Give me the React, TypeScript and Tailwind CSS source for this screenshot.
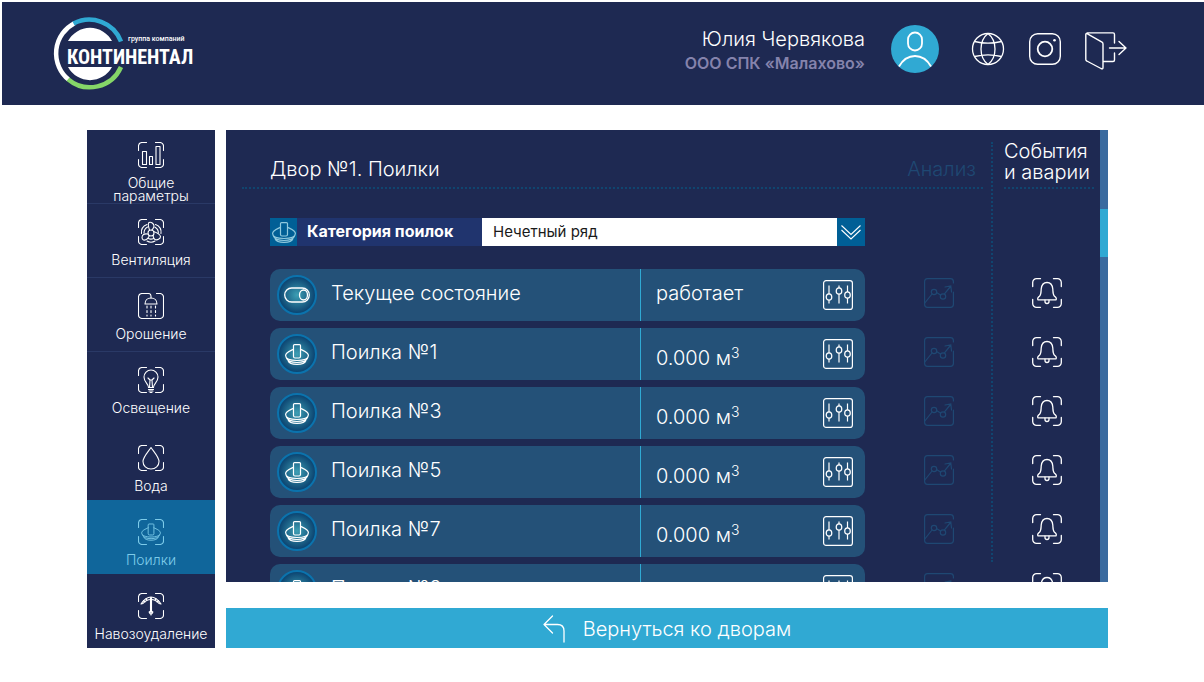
import React from 'react';

type IconProps = { className?: string };

const Frame: React.FC<{ className?: string; children?: React.ReactNode }> = ({ className, children }) => (
  <svg viewBox="0 0 26 26" className={className} fill="none" stroke="currentColor" strokeWidth="1.1" strokeLinecap="round" strokeLinejoin="round">
    <path d="M8.5.5H4A3.5 3.5 0 0 0 .5 4v4.500M17.500.5H22A3.500 3.500 0 0 1 25.500 4v4.500M.5 17.500V22A3.500 3.500 0 0 0 4 25.500h4.500M17.500 25.500H22a3.500 3.500 0 0 0 3.500-3.500v-4.500" />
    {children}
  </svg>
);

const drinker = (
  <>
    <path d="M8.500 1.500Q8.500.6 9.500.6h5q1 0 1 .9V12.500q0 1.500-1.500 1.500h-4q-1.500 0-1.500-1.500z" />
    <path d="M8.500 5.200C5 7 .6 8.500.6 11.500c0 3.300 5 5 11.400 5s11.400-1.700 11.400-5c0-3-4.400-4.500-7.900-6.300" />
    <path d="M1.500 14c1 3 5 4.500 10.500 4.500S21.500 17 22.500 14M3 16.500c1 2.800 4.500 3.900 9 3.900s8-1.100 9-3.900" />
  </>
);

const DrinkerIcon: React.FC<IconProps> = ({ className }) => (
  <svg viewBox="0 0 24 21" className={className} fill="none" stroke="currentColor" strokeWidth="1.200" strokeLinejoin="round">
    {drinker}
  </svg>
);

const ParamsIcon: React.FC<IconProps> = ({ className }) => (
  <Frame className={className}>
    <path d="M4.500 9.500h4v13h-4zM11.500 14.500h3v8h-3zM18 4.500h4v18h-4z" />
  </Frame>
);

const FanIcon: React.FC<IconProps> = ({ className }) => (
  <Frame className={className}>
    <circle cx="13" cy="14" r="3" />
    <path d="M11.500 11.200C10.500 8 9.500 4.500 11 3.500c2-1 5 1 5 3.500 0 2-1.500 3-2 4M15.500 12.500c3 1 6.500 2.500 7 5 0 2.500-3.500 4-5.500 3-2-1-1.500-3-2-4M11.500 16.500c-1.500 3-4 5-6 4.500-2-1-2-4 0-5.500 1.500-1 3.500-.5 4.500-.5" />
    <path d="M9 5.500C5 7 3 10.500 3.500 14.500M9.500 8C7 9.500 6 11.500 6 14M17.500 5.500c4 1.500 6 5 5.500 9M17 8.200c2.500 1.500 3.500 3.500 3.300 5.800M9 22c2.500 1.500 5.500 1.500 8 0M10.500 19.500c1.500.8 3.500.8 5 0" />
  </Frame>
);

const ShowerIcon: React.FC<IconProps> = ({ className }) => (
  <svg viewBox="0 0 26 26" className={className} fill="none" stroke="currentColor" strokeWidth="1.100" strokeLinecap="round" strokeLinejoin="round">
    <path d="M18.500.5H22A3.500 3.500 0 0 1 25.500 4v18a3.500 3.500 0 0 1-3.500 3.500H4A3.500 3.500 0 0 1 .5 22V4A3.500 3.500 0 0 1 4 .5h6.500Q13 .5 13 3v2" />
    <path d="M7 11c0-3.500 2.500-6 6-6s6 2.500 6 6z" />
    <path d="M9 13v10M13 13v10M17.500 13v10" strokeDasharray="2 2.500" />
  </svg>
);

const BulbIcon: React.FC<IconProps> = ({ className }) => (
  <Frame className={className}>
    <path d="M10.500 20.500c0-4-4.500-5-4.500-10.500a7 7 0 0 1 14 0c0 5.500-4.500 6.500-4.500 10.500z" />
    <path d="M11.500 20.500 12 13l-2-2M14.500 20.500 14 13l2-2M12 13h2M10.500 22.500h5M11 24h4M12 25.500h2" />
  </Frame>
);

const DropIcon: React.FC<IconProps> = ({ className }) => (
  <Frame className={className}>
    <path d="M13 2.500c3 4.500 8 9.500 8 14 0 4.500-3.500 7.500-8 7.500s-8-3-8-7.500c0-4.500 5-9.500 8-14z" />
  </Frame>
);

const FramedDrinkerIcon: React.FC<IconProps> = ({ className }) => (
  <Frame className={className}>
    <g transform="translate(3.200 4.500) scale(.82)">{drinker}</g>
  </Frame>
);

const ScraperIcon: React.FC<IconProps> = ({ className }) => (
  <Frame className={className}>
    <path d="M3 11C6 6.500 9.500 4 13 4s7 2.500 10 7M3 11l2-.5C7.500 7.500 10 6.500 13 6.500s5.500 1 8 4l2 .5M8 5.500l1 2M18 5.500l-1 2M5.500 7.500 7 9M20.500 7.500 19 9" />
    <path d="M12.500 4.500v14M13.500 4.500v14M11 19h4M13 17v5" />
    <circle cx="13" cy="19.500" r="1.500" />
  </Frame>
);

const SlidersIcon: React.FC<IconProps> = ({ className }) => (
  <svg viewBox="0 0 30 30" className={className} fill="none" stroke="currentColor" strokeWidth="1.200">
    <rect x=".6" y=".6" width="28.800" height="28.800" rx="2.500" />
    <path d="M6 5.500V14M6 20v3.500M16 5.500V8M16 14v9.500M24.500 5.500V12M24.500 18v5.500" />
    <ellipse cx="6" cy="17" rx="2.800" ry="3.200" />
    <ellipse cx="16" cy="11" rx="2.800" ry="3.200" />
    <ellipse cx="24.500" cy="15" rx="2.800" ry="3.200" />
  </svg>
);

const ChartIcon: React.FC<IconProps> = ({ className }) => (
  <svg viewBox="0 0 30 30" className={className} fill="none" stroke="currentColor" strokeWidth="1.200" strokeLinecap="round">
    <path d="M29.400 5V3.500a3 3 0 0 0-3-2.900H3.500a3 3 0 0 0-2.900 2.900v23a3 3 0 0 0 2.900 2.900h23a3 3 0 0 0 2.900-2.900V14" />
    <path d="M.8 25 8 16M12.500 14.500l4 2.500M20.500 15.800 26.500 8.500M21 9l5.800-1 .7 6" />
    <circle cx="10" cy="14" r="2.700" />
    <circle cx="19" cy="18.500" r="2.700" />
  </svg>
);

const BellIcon: React.FC<IconProps> = ({ className }) => (
  <svg viewBox="0 0 30 30" className={className} fill="none" stroke="currentColor" strokeWidth="1.300" strokeLinecap="round" strokeLinejoin="round">
    <path d="M8.500.7H4.500A3.800 3.800 0 0 0 .7 4.500v4M21.500.7h4a3.800 3.800 0 0 1 3.800 3.800v4M.7 21.500v4a3.800 3.800 0 0 0 3.800 3.800h4M21.500 29.300h4a3.800 3.800 0 0 0 3.800-3.800v-4" />
    <path d="M6 21.800c-1-1.300.3-2.800 1.500-3.600C9.300 16.500 9 13.500 9.200 11c.4-4 2.600-6.500 5.800-6.500s5.400 2.500 5.800 6.500c.2 2.500-.1 5.500 1.700 7.200 1.200.8 2.500 2.300 1.500 3.600z" />
    <path d="M13 22.200v1.300a2 2 0 0 0 4 0v-1.300" />
  </svg>
);

const ToggleIcon: React.FC<IconProps> = ({ className }) => (
  <svg viewBox="0 0 26 16" className={className} fill="none" stroke="currentColor" strokeWidth="1.300">
    <rect x=".7" y="1" width="24.600" height="14" rx="7" />
    <ellipse cx="19.500" cy="8" rx="4" ry="5" />
  </svg>
);

const Logo: React.FC = () => (
  <svg viewBox="0 0 142 74" className="h-[74px] w-[142px]" role="img" aria-label="Континентал">
    <g fill="none" strokeWidth="4.500">
      <path d="M21.400 6.200A34 34 0 0 0 15.500 62.600" stroke="#fff" />
      <path d="M20.500 6.600A34 34 0 0 1 68 24.500" stroke="#30a9d3" />
      <path d="M15 62.200A34 34 0 0 0 68 50" stroke="#85d668" />
    </g>
    <path d="M15 24a25 25 0 0 1 44 0zM15 50a25 25 0 0 0 44 0z" fill="#fff" />
    <text x="14" y="47" fill="#fff" fontSize="20" fontWeight="700" fontFamily="'Roboto Condensed', 'Liberation Sans Narrow', sans-serif">
      КОНТИНЕНТАЛ
    </text>
    <text x="75" y="24" fill="#fff" fontSize="7" fontWeight="500" fontFamily="Roboto, sans-serif">
      группа компаний
    </text>
  </svg>
);

const GlobeIcon: React.FC<IconProps> = ({ className }) => (
  <svg viewBox="0 0 34 34" className={className} fill="none" stroke="currentColor" strokeWidth="1.300">
    <circle cx="17" cy="17" r="15.500" />
    <path d="M17 1.500C12.500 5 10 10.500 10 17s2.500 12 7 15.500c4.500-3.500 7-9 7-15.500s-2.500-12-7-15.500zM3.500 9.500c8 2 19 2 27 0M3.500 24.500c8-2 19-2 27 0" />
  </svg>
);

const InstagramIcon: React.FC<IconProps> = ({ className }) => (
  <svg viewBox="0 0 32 32" className={className} fill="none" stroke="currentColor" strokeWidth="1.400">
    <rect x=".7" y=".7" width="30.600" height="30.600" rx="8" />
    <circle cx="16" cy="16" r="7.300" strokeWidth="1.800" />
    <circle cx="25.500" cy="7.300" r="1.300" fill="currentColor" stroke="none" />
  </svg>
);

const ExitIcon: React.FC<IconProps> = ({ className }) => (
  <svg viewBox="0 0 42 38" className={className} fill="none" stroke="currentColor" strokeWidth="1.400" strokeLinecap="round" strokeLinejoin="round">
    <path d="M.8 2.500v25q0 1 1 1.500L16 36.500q2 1 2-1V12q0-1.200-1-1.800L2.500 1.800Q.8 1 .8 2.500zM2 .9h26q1.500 0 1.500 1.500V11M18.500 29.500H28q1.500 0 1.500-1.500v-7" />
    <path d="M24.500 16H41M34 9.500l7 6.500-7 6.500" />
  </svg>
);

const menu = [
  { label: 'Общие параметры', icon: ParamsIcon, pad: 'pt-3 border-b' },
  { label: 'Вентиляция', icon: FanIcon, pad: 'pt-[15px] border-b' },
  { label: 'Орошение', icon: ShowerIcon, pad: 'pt-[15px] border-b' },
  { label: 'Освещение', icon: BulbIcon, pad: 'pt-[15px]' },
  { label: 'Вода', icon: DropIcon, pad: 'pt-[19px]' },
  { label: 'Поилки', icon: FramedDrinkerIcon, pad: 'pt-[19px]', active: true },
  { label: 'Навозоудаление', icon: ScraperIcon, pad: 'pt-[19px]' },
];

const rows = [
  { label: 'Текущее состояние', value: 'работает', state: true },
  { label: 'Поилка №1', value: '0.000' },
  { label: 'Поилка №3', value: '0.000' },
  { label: 'Поилка №5', value: '0.000' },
  { label: 'Поилка №7', value: '0.000' },
  { label: 'Поилка №9', value: '0.000' },
];

const Header: React.FC = () => (
  <header className="flex h-[103px] items-start justify-between bg-[#1e2952] pl-[51px] pr-[77px] pt-[15px] text-white">
    <Logo />
    <div className="flex items-center pt-1.5">
      <div className="mr-[26px] pt-1 text-right">
        <div className="text-xl leading-6 font-light">Юлия Червякова</div>
        <div className="text-base leading-6 font-semibold text-[#8583ac]">ООО СПК «Малахово»</div>
      </div>
      <button type="button" aria-label="Профиль" className="mr-8 h-12 w-12">
        <svg viewBox="0 0 48 48" className="h-12 w-12" fill="none" stroke="#fff" strokeWidth="1.800">
          <circle cx="24" cy="24" r="24" fill="#30a9d3" stroke="none" />
          <rect x="17" y="7.500" width="14" height="18" rx="7" />
          <path d="M8 41.500C12 34.500 17.500 31 24 31s12 3.500 16 10.500" />
        </svg>
      </button>
      <nav className="flex items-center gap-6">
        <a href="#lang" aria-label="Язык"><GlobeIcon className="h-[34px] w-[34px]" /></a>
        <a href="#instagram" aria-label="Instagram"><InstagramIcon className="h-8 w-8" /></a>
        <a href="#exit" aria-label="Выход"><ExitIcon className="mt-1 h-[38px] w-[42px]" /></a>
      </nav>
    </div>
  </header>
);

const Sidebar: React.FC = () => (
  <nav className="w-32 shrink-0 bg-[#1e2952]">
    {menu.map(({ label, icon: Icon, pad, active }) => (
      <a
        key={label}
        href="#menu"
        className={`flex h-[74px] flex-col items-center gap-2 border-[#2a3966] text-center text-sm leading-[13px] ${pad} ${active ? 'bg-[#10669b] text-[#7dcbe9]' : 'text-white'}`}
      >
        <Icon className="h-[26px] w-[26px] shrink-0" />
        <span className="px-1">{label}</span>
      </a>
    ))}
  </nav>
);

const App: React.FC = () => {
  return (
    <div className="bg-white pl-0.5 pt-0.5 font-light font-['Inter','Open_Sans',sans-serif]">
      <Header />
      <div className="flex gap-[11px] pb-8 pl-[85px] pr-24 pt-[25px]">
        <Sidebar />
        <main className="flex min-w-0 flex-1 flex-col gap-[26px]">
          <section className="flex h-[452px] overflow-hidden bg-[#1e2952] text-xl text-white">
            {/* Drinkers and analysis */}
            <div className="min-w-0 flex-1">
              <div className="ml-4 mr-2 flex h-[59px] items-end justify-between border-b-2 border-dotted border-[#10456f] pb-1 pl-7 pr-[7px]">
                <h1>Двор №1. Поилки</h1>
                <span className="text-[#1f4873]">Анализ</span>
              </div>
              <div className="pl-11 pt-[29px]">
                <div className="mr-[126px] flex h-7 text-base">
                  <span className="flex w-[27px] items-center justify-center bg-[#005f96] text-[#8fc9de]">
                    <DrinkerIcon className="h-[21px] w-6" />
                  </span>
                  <label htmlFor="category" className="w-[185px] bg-[#20346e] pl-[10px] leading-[26px] font-bold">
                    Категория поилок
                  </label>
                  <div className="relative flex-1">
                    <select id="category" className="h-7 w-full appearance-none bg-white pl-[11px] text-[15px] font-normal text-[#1a1a1a]">
                      <option>Нечетный ряд</option>
                      <option>Четный ряд</option>
                    </select>
                    <span className="pointer-events-none absolute inset-y-0 right-0 flex w-7 items-center justify-center bg-[#005f96]">
                      <svg viewBox="0 0 20 15" className="h-[15px] w-5" fill="none" stroke="#fff" strokeWidth="1.100">
                        <path d="M.5.5 10 9.500 19.500.5M.5 5 10 14l9.500-9" />
                      </svg>
                    </span>
                  </div>
                </div>
                <ul className="mt-[23px] flex flex-col gap-[7px]">
                  {rows.map((row) => (
                    <li key={row.label} className="flex h-[52px]">
                      <div className="mr-[22px] flex flex-1 items-center rounded-[10px] bg-[#245178] pl-[7px] pr-3">
                        <span className="flex h-10 w-10 items-center justify-center rounded-full border-2 border-[#0b73ad] bg-[radial-gradient(circle,#3d9fb4_0%,#0e4874_68%)]">
                          {row.state ? <ToggleIcon className="h-4 w-[26px]" /> : <DrinkerIcon className="h-[21px] w-6" />}
                        </span>
                        <span className="flex-1 pb-1 pl-[14px]">{row.label}</span>
                        <span className="flex h-full w-[213px] items-center justify-between border-l border-[#30a9d3] pl-[15px]">
                          {row.state ? (
                            <span className="pb-1">{row.value}</span>
                          ) : (
                            <span className="pt-2">
                              {row.value} м<sup className="text-sm">3</sup>
                            </span>
                          )}
                          <button type="button" aria-label="Настройки">
                            <SlidersIcon className="h-[30px] w-[30px]" />
                          </button>
                        </span>
                      </div>
                      <div className="flex w-[104px] items-center justify-center pb-1">
                        <button type="button" aria-label="Анализ" className="text-[#1f4873]">
                          <ChartIcon className="h-[30px] w-[30px]" />
                        </button>
                      </div>
                    </li>
                  ))}
                </ul>
              </div>
            </div>
            <div className="mb-5 mt-3 w-0 border-l-2 border-dotted border-[#10456f]" />
            {/* Events and alarms */}
            <div className="w-[107px] shrink-0">
              <h2 className="ml-[11px] mr-[6px] flex h-[59px] items-end border-b-2 border-dotted border-[#10456f] pb-1 leading-[21px]">
                События
                <br />и аварии
              </h2>
              <ul className="mt-20 flex flex-col gap-[7px]">
                {rows.map((row) => (
                  <li key={row.label} className="flex h-[52px] items-center justify-center pb-1">
                    <button type="button" aria-label="События и аварии">
                      <BellIcon className="h-[30px] w-[30px]" />
                    </button>
                  </li>
                ))}
              </ul>
            </div>
            <div className="w-2 shrink-0 bg-[#3b6b9f] pt-[79px]">
              <div className="h-12 bg-[#30a9d3]" />
            </div>
          </section>
          <button type="button" className="flex h-10 items-center justify-center gap-[18px] bg-[#30a9d3] pt-0.5 text-xl text-white">
            <svg viewBox="0 0 22 28" className="h-7 w-[22px]" fill="none" stroke="currentColor" strokeWidth="1.300" strokeLinecap="round" strokeLinejoin="round">
              <path d="M9.500 1 1 9.500 9.500 18M1 9.500h13.500Q21 9.500 21 16v11" />
            </svg>
            Вернуться ко дворам
          </button>
        </main>
      </div>
    </div>
  );
};

export default App;
